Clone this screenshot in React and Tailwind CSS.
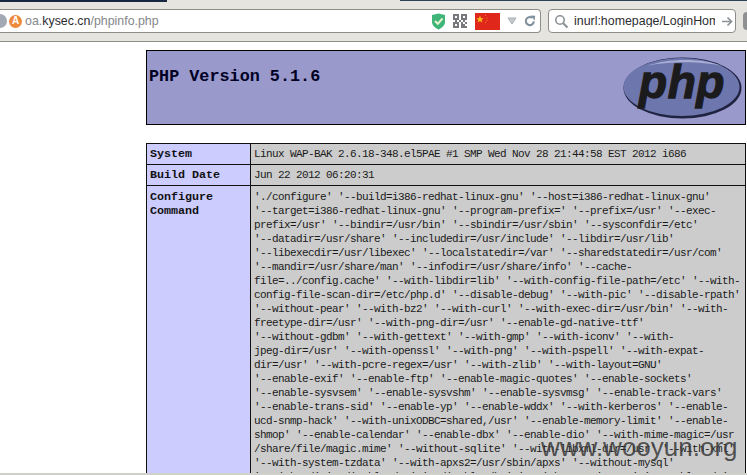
const LINES = [
  `'./configure' '--build=i386-redhat-linux-gnu' '--host=i386-redhat-linux-gnu'`,
  `'--target=i386-redhat-linux-gnu' '--program-prefix=' '--prefix=/usr' '--exec-`,
  `prefix=/usr' '--bindir=/usr/bin' '--sbindir=/usr/sbin' '--sysconfdir=/etc'`,
  `'--datadir=/usr/share' '--includedir=/usr/include' '--libdir=/usr/lib'`,
  `'--libexecdir=/usr/libexec' '--localstatedir=/var' '--sharedstatedir=/usr/com'`,
  `'--mandir=/usr/share/man' '--infodir=/usr/share/info' '--cache-`,
  `file=../config.cache' '--with-libdir=lib' '--with-config-file-path=/etc' '--with-`,
  `config-file-scan-dir=/etc/php.d' '--disable-debug' '--with-pic' '--disable-rpath'`,
  `'--without-pear' '--with-bz2' '--with-curl' '--with-exec-dir=/usr/bin' '--with-`,
  `freetype-dir=/usr' '--with-png-dir=/usr' '--enable-gd-native-ttf'`,
  `'--without-gdbm' '--with-gettext' '--with-gmp' '--with-iconv' '--with-`,
  `jpeg-dir=/usr' '--with-openssl' '--with-png' '--with-pspell' '--with-expat-`,
  `dir=/usr' '--with-pcre-regex=/usr' '--with-zlib' '--with-layout=GNU'`,
  `'--enable-exif' '--enable-ftp' '--enable-magic-quotes' '--enable-sockets'`,
  `'--enable-sysvsem' '--enable-sysvshm' '--enable-sysvmsg' '--enable-track-vars'`,
  `'--enable-trans-sid' '--enable-yp' '--enable-wddx' '--with-kerberos' '--enable-`,
  `ucd-snmp-hack' '--with-unixODBC=shared,/usr' '--enable-memory-limit' '--enable-`,
  `shmop' '--enable-calendar' '--enable-dbx' '--enable-dio' '--with-mime-magic=/usr`,
  `/share/file/magic.mime' '--without-sqlite' '--with-libxml-dir=/usr' '--with-xml'`,
  `'--with-system-tzdata' '--with-apxs2=/usr/sbin/apxs' '--without-mysql'`,
  `'--with-gd' '--disable-dom' '--disable-dba' '--without-unixODBC' '--enable-pdo'`,
];

function Shield() {
  return (
    <svg width="15" height="17" viewBox="0 0 15 17" className="shrink-0">
      <path d="M1 2 L7.5 0.5 L14 2 V9 C14 12.5 10.5 15 7.5 16.5 C4.5 15 1 12.5 1 9 Z" fill="#3fb57a" />
      <path d="M4 8 L6.8 10.8 L11.5 5.5" fill="none" stroke="#e9f5d0" strokeWidth="2" />
    </svg>
  );
}

function Qr() {
  const cells = ["1110111", "1010101", "1110111", "0101010", "1110101", "1010110", "1110111"];
  return (
    <svg width="14" height="14" viewBox="0 0 7 7" className="shrink-0" shapeRendering="crispEdges">
      {cells.map((r, y) =>
        r.split("").map((c, x) => (c === "1" ? <rect key={x + "-" + y} x={x} y={y} width="1" height="1" fill="#77797c" /> : null))
      )}
    </svg>
  );
}

function Flag() {
  return (
    <svg width="25" height="17" viewBox="0 0 25 17" className="shrink-0">
      <rect width="25" height="17" fill="#e0271c" />
      <path d="M5 2.5 L6 5.2 L8.8 5.2 L6.6 6.9 L7.4 9.6 L5 8 L2.6 9.6 L3.4 6.9 L1.2 5.2 L4 5.2 Z" fill="#f7c017" />
      <circle cx="10.5" cy="2.5" r="0.5" fill="#f7a017" />
      <circle cx="12" cy="5" r="0.5" fill="#f7a017" />
      <circle cx="12" cy="7.5" r="0.5" fill="#f7a017" />
      <circle cx="10.5" cy="9.5" r="0.5" fill="#f7a017" />
    </svg>
  );
}

function Reload() {
  return (
    <svg width="12" height="14" viewBox="0 0 14 14" className="shrink-0">
      <path d="M11.5 7.5 A4.7 4.7 0 1 1 9.5 3.2" fill="none" stroke="#7f8f9c" strokeWidth="2.4" />
      <path d="M7.5 0.5 L13 1 L12.5 6.5 Z" fill="#7f8f9c" />
    </svg>
  );
}

function Search() {
  return (
    <svg width="15" height="15" viewBox="0 0 15 15" className="shrink-0">
      <circle cx="6" cy="6" r="4.2" fill="none" stroke="#8d9296" strokeWidth="1.6" />
      <path d="M9.2 9.2 L13.5 13.5" stroke="#8d9296" strokeWidth="2.2" />
    </svg>
  );
}

function Arrow() {
  return (
    <svg width="12" height="11" viewBox="0 0 12 11" className="shrink-0">
      <path d="M1 5.5 H10 M6.5 1.5 L10.5 5.5 L6.5 9.5" fill="none" stroke="#8b9298" strokeWidth="1.7" />
    </svg>
  );
}

function PhpLogo() {
  return (
    <svg width="119" height="62" viewBox="0 0 119 62" className="shrink-0">
      <ellipse cx="59.5" cy="31" rx="59" ry="30.5" fill="#1f2340" />
      <ellipse cx="58.5" cy="30" rx="58" ry="29" fill="#6d76ad" />
      <path d="M24 9 C45 1 80 1 99 9 C78 4 45 4 24 9 Z" fill="#a9aed4" />
      <text
        x="59"
        y="41"
        textAnchor="middle"
        fontFamily="'Liberation Sans', sans-serif"
        fontSize="46"
        fontWeight="700"
        fontStyle="italic"
        letterSpacing="0.5"
        fill="#1b1a1c"
        stroke="#1b1a1c"
        strokeWidth="1.3"
      >
        php
      </text>
    </svg>
  );
}

const mono = "font-['Liberation_Mono',monospace] text-[11px] tracking-[-0.6px] leading-[14px] text-[#1a1a1a]";
const label = "font-['Liberation_Mono',monospace] font-bold text-[11.7px] leading-[14px] text-[#111111]";

export default function App() {
  return (
    <div className="w-[747px] h-[475px] overflow-hidden relative bg-white font-['Liberation_Sans',sans-serif]">
      <div className="h-[9px] bg-[#e6e4df] flex">
        <div className="w-[167px] h-[2px] bg-[#16283f]" />
        <div className="ml-[233px] flex-1 h-px bg-[#2f4158]" />
      </div>
      <div className="h-[33px] bg-[#e6e4df] flex border-b border-[#8e8e8a]">
        <div className="h-[24px] w-[541px] shrink-0 bg-white border-y border-r border-[#8c8c88] rounded-r-sm flex items-center">
          <div className="w-[7px] h-[14px] rounded-r-full bg-[#a3a9b4]" />
          <div className="w-[13px] h-[13px] ml-[2px] rounded-full bg-[#ee8a3c] flex items-center justify-center text-white text-[10px] font-bold leading-none">A</div>
          <div className="ml-[3px] text-[12.4px] leading-none text-[#85878a]">
            oa.<span className="text-[#2c2d30]">kysec.cn</span>/phpinfo.php
          </div>
          <div className="ml-auto flex items-center pr-[4px]">
            <Shield />
            <div className="ml-[7px]"><Qr /></div>
            <div className="ml-[8px]"><Flag /></div>
            <svg width="10" height="8" viewBox="0 0 10 8" className="ml-[7px]"><path d="M1 1 H9 L5 7 Z" fill="#c3c8cb" stroke="#a9b0b4" strokeWidth="1" /></svg>
            <div className="ml-[7px]"><Reload /></div>
          </div>
        </div>
        <div className="ml-[7px] w-[188px] shrink-0 h-[24px] bg-white border border-[#8c8c88] rounded-sm flex items-center pl-[5px]">
          <Search />
          <div className="ml-[5px] w-[141px] overflow-hidden whitespace-nowrap text-[12.4px] leading-none text-[#2c2d30]">inurl:homepage/LoginHome</div>
          <div className="ml-[6px]"><Arrow /></div>
        </div>
        <div className="ml-[7px] w-[4px] shrink-0 h-[18px] mt-[3px] rounded-l-full bg-[#8f9092]" />
      </div>

      <div className="ml-[146px] w-[600px] mt-[8px]">
        <div className="h-[75px] bg-[#9999cc] border border-black flex justify-between pl-[2px] pr-[3px]">
          <h1 className="mt-[16px] font-['Liberation_Mono',monospace] font-bold text-[16.8px] leading-[20px] text-[#000022]">PHP Version 5.1.6</h1>
          <div className="mt-[6px]"><PhpLogo /></div>
        </div>
        <div className="mt-[18px] border border-[#111] border-b-0 flex flex-col">
          <div className="flex h-[21px] border-b border-[#111]">
            <div className={`w-[104px] shrink-0 bg-[#ccccff] border-r border-[#111] pl-[3px] pt-[3px] ${label}`}>System</div>
            <div className={`flex-1 bg-[#cccccc] pl-[3px] pt-[3px] whitespace-nowrap ${mono}`}>Linux WAP-BAK 2.6.18-348.el5PAE #1 SMP Wed Nov 28 21:44:58 EST 2012 i686</div>
          </div>
          <div className="flex h-[21px] border-b border-[#111]">
            <div className={`w-[104px] shrink-0 bg-[#ccccff] border-r border-[#111] pl-[3px] pt-[3px] ${label}`}>Build Date</div>
            <div className={`flex-1 bg-[#cccccc] pl-[3px] pt-[3px] whitespace-nowrap ${mono}`}>Jun 22 2012 06:20:31</div>
          </div>
          <div className="flex">
            <div className={`w-[104px] shrink-0 bg-[#ccccff] border-r border-[#111] pl-[3px] pt-[4px] ${label}`}>Configure<br />Command</div>
            <div className={`flex-1 bg-[#cccccc] pl-[3px] pt-[4px] whitespace-pre ${mono}`}>
              {LINES.map((l, i) => <div key={i}>{l}</div>)}
            </div>
          </div>
        </div>
      </div>

      <div className="absolute left-[541px] top-[431px] text-[26px] leading-[32px] text-[#3a3a3a]/85 whitespace-nowrap">www.wooyun.org</div>
      <div className="absolute left-0 right-0 bottom-0 h-[2px] bg-[#cfcfcb]" />
    </div>
  );
}
